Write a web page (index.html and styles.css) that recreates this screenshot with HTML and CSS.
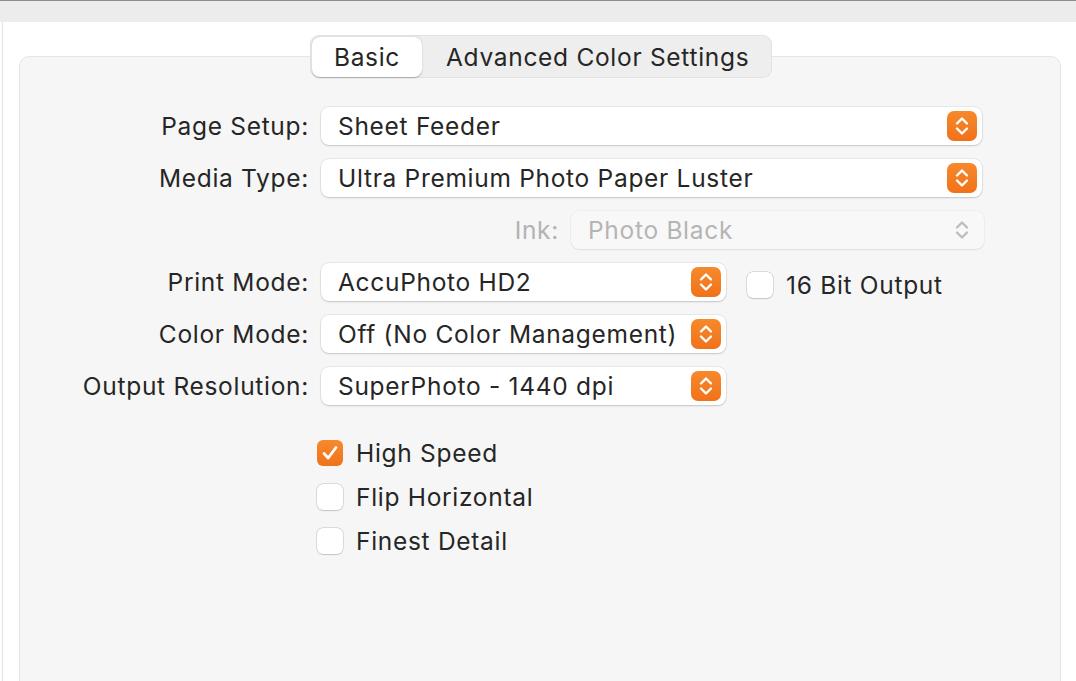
FILE: index.html
```html
<!DOCTYPE html>
<html>
<head>
<meta charset="utf-8">
<link rel="stylesheet" href="styles.css">
</head>
<body>
<div class="titlebar"></div>
<div class="main">
  <div class="tabs">
    <div class="seg">
      <div class="seg-item active">Basic</div>
      <div class="seg-item">Advanced Color Settings</div>
    </div>
  </div>
  <div class="group">
    <div class="form">
      <div class="label">Page Setup:</div>
      <div class="ctl"><div class="popup w-full"><span>Sheet Feeder</span><span class="step"><svg viewBox="0 0 30 30" width="30" height="30"><path d="M10 12.5 L15 7.5 L20 12.5 M10 17.5 L15 22.5 L20 17.5" fill="none" stroke="#fff" stroke-width="2.4" stroke-linecap="round" stroke-linejoin="round"/></svg></span></div></div>

      <div class="label"><span class="label">Media Type:</span></div>
      <div class="ctl"><div class="popup w-full"><span>Ultra Premium Photo Paper Luster</span><span class="step"><svg viewBox="0 0 30 30" width="30" height="30"><path d="M10 12.5 L15 7.5 L20 12.5 M10 17.5 L15 22.5 L20 17.5" fill="none" stroke="#fff" stroke-width="2.4" stroke-linecap="round" stroke-linejoin="round"/></svg></span></div></div>

      <div class="label"></div>
      <div class="ctl ink-row"><span class="label dis">Ink:</span><div class="popup disabled w-ink"><span>Photo Black</span><span class="step off"><svg viewBox="0 0 30 30" width="30" height="30"><path d="M10 12.5 L15 7.5 L20 12.5 M10 17.5 L15 22.5 L20 17.5" fill="none" stroke="#bdbdbd" stroke-width="2.4" stroke-linecap="round" stroke-linejoin="round"/></svg></span></div></div>

      <div class="label">Print Mode:</div>
      <div class="ctl row"><div class="popup w-half"><span>AccuPhoto HD2</span><span class="step"><svg viewBox="0 0 30 30" width="30" height="30"><path d="M10 12.5 L15 7.5 L20 12.5 M10 17.5 L15 22.5 L20 17.5" fill="none" stroke="#fff" stroke-width="2.4" stroke-linecap="round" stroke-linejoin="round"/></svg></span></div>
        <label class="check bit"><span class="box"></span><span>16 Bit Output</span></label></div>

      <div class="label">Color Mode:</div>
      <div class="ctl"><div class="popup w-half"><span>Off (No Color Management)</span><span class="step"><svg viewBox="0 0 30 30" width="30" height="30"><path d="M10 12.5 L15 7.5 L20 12.5 M10 17.5 L15 22.5 L20 17.5" fill="none" stroke="#fff" stroke-width="2.4" stroke-linecap="round" stroke-linejoin="round"/></svg></span></div></div>

      <div class="label">Output Resolution:</div>
      <div class="ctl"><div class="popup w-half"><span>SuperPhoto - 1440 dpi</span><span class="step"><svg viewBox="0 0 30 30" width="30" height="30"><path d="M10 12.5 L15 7.5 L20 12.5 M10 17.5 L15 22.5 L20 17.5" fill="none" stroke="#fff" stroke-width="2.4" stroke-linecap="round" stroke-linejoin="round"/></svg></span></div></div>
    </div>

    <div class="checks">
      <label class="check"><span class="box on"><svg viewBox="0 0 26 26" width="26" height="26"><path d="M7 13.5 L11.2 18 L19 7.5" fill="none" stroke="#fff" stroke-width="2.8" stroke-linecap="round" stroke-linejoin="round"/></svg></span><span>High Speed</span></label>
      <label class="check"><span class="box"></span><span>Flip Horizontal</span></label>
      <label class="check"><span class="box"></span><span>Finest Detail</span></label>
    </div>
  </div>
</div>
</body>
</html>
```

FILE: styles.css
```css
html, body {
  margin: 0;
  padding: 0;
  background: #ffffff;
  font-family: Inter, "Noto Sans", "Liberation Sans", sans-serif;
  color: #262626;
  font-size: 24.5px;
  letter-spacing: 0.7px;
  overflow: hidden;
  height: 681px;
}
.titlebar {
  height: 21px;
  background: #ececec;
  border-top: 1px solid #8c8c8c;
}
.main {
  border-left: 1px solid #e2e2e2;
  margin-left: 2px;
  padding: 13px 15px 0 16px;
  height: 681px;
  box-sizing: border-box;
  overflow: hidden;
}
.tabs {
  display: flex;
  justify-content: center;
  position: relative;
  z-index: 1;
  padding-left: 2px;
}
.seg {
  display: flex;
  background: #eeeeee;
  border: 1px solid #e2e2e2;
  border-radius: 9px;
  height: 43px;
  box-sizing: border-box;
  padding: 1px;
  width: 462px;
}
.seg-item {
  display: flex;
  align-items: center;
  height: 40px;
  border-radius: 8px;
  box-sizing: border-box;
}
.seg-item.active {
  background: #ffffff;
  box-shadow: 0 0.5px 1.5px rgba(0,0,0,0.28);
  width: 110px;
  justify-content: center;
}
.seg-item + .seg-item {
  padding-left: 24px;
}
.group {
  margin-top: -22px;
  background: #f6f6f6;
  border: 1px solid #e6e6e6;
  border-radius: 10px;
  height: 700px;
  box-sizing: border-box;
  padding-top: 50px;
}
.form {
  display: grid;
  grid-template-columns: 289px 1fr;
  column-gap: 12px;
  row-gap: 14px;
  align-items: center;
}
.label {
  text-align: right;
  white-space: nowrap;
}
.label.dis {
  color: #b3b3b3;
}
.ctl {
  display: flex;
  align-items: center;
}
.ink-row {
  justify-content: flex-end;
  gap: 12px;
  width: 663px;
}
.row {
  gap: 21px;
}
.popup {
  height: 38px;
  box-sizing: border-box;
  background: #ffffff;
  border-radius: 8px;
  box-shadow: 0 0 0 0.5px rgba(0,0,0,0.10), 0 1px 2px rgba(0,0,0,0.16);
  display: flex;
  align-items: center;
  justify-content: space-between;
  padding: 0 5px 0 17px;
  white-space: nowrap;
}
.popup.disabled {
  background: #f8f8f8;
  color: #b5b5b5;
  box-shadow: 0 0 0 0.5px rgba(0,0,0,0.06), 0 1px 1.5px rgba(0,0,0,0.07);
  padding-right: 7px;
}
.w-full { width: 661px; }
.w-ink { width: 413px; }
.w-half { width: 405px; }
.step {
  width: 30px;
  height: 30px;
  border-radius: 7px;
  background: linear-gradient(#f7892c, #f0721a);
  display: flex;
}
.step.off {
  background: none;
}
.checks {
  display: flex;
  flex-direction: column;
  gap: 18px;
  margin-top: 35px;
  padding-left: 297px;
}
.check {
  display: flex;
  align-items: center;
  gap: 13px;
  height: 26px;
  white-space: nowrap;
}
.box {
  width: 26px;
  height: 26px;
  flex: none;
  box-sizing: border-box;
  border-radius: 6px;
  background: #ffffff;
  box-shadow: 0 0 0 0.5px rgba(0,0,0,0.18), 0 0.5px 1.5px rgba(0,0,0,0.12);
  display: flex;
}
.box.on {
  background: linear-gradient(#f7892c, #f0721a);
  box-shadow: none;
}
.bit {
  margin-top: 6px;
}
```
